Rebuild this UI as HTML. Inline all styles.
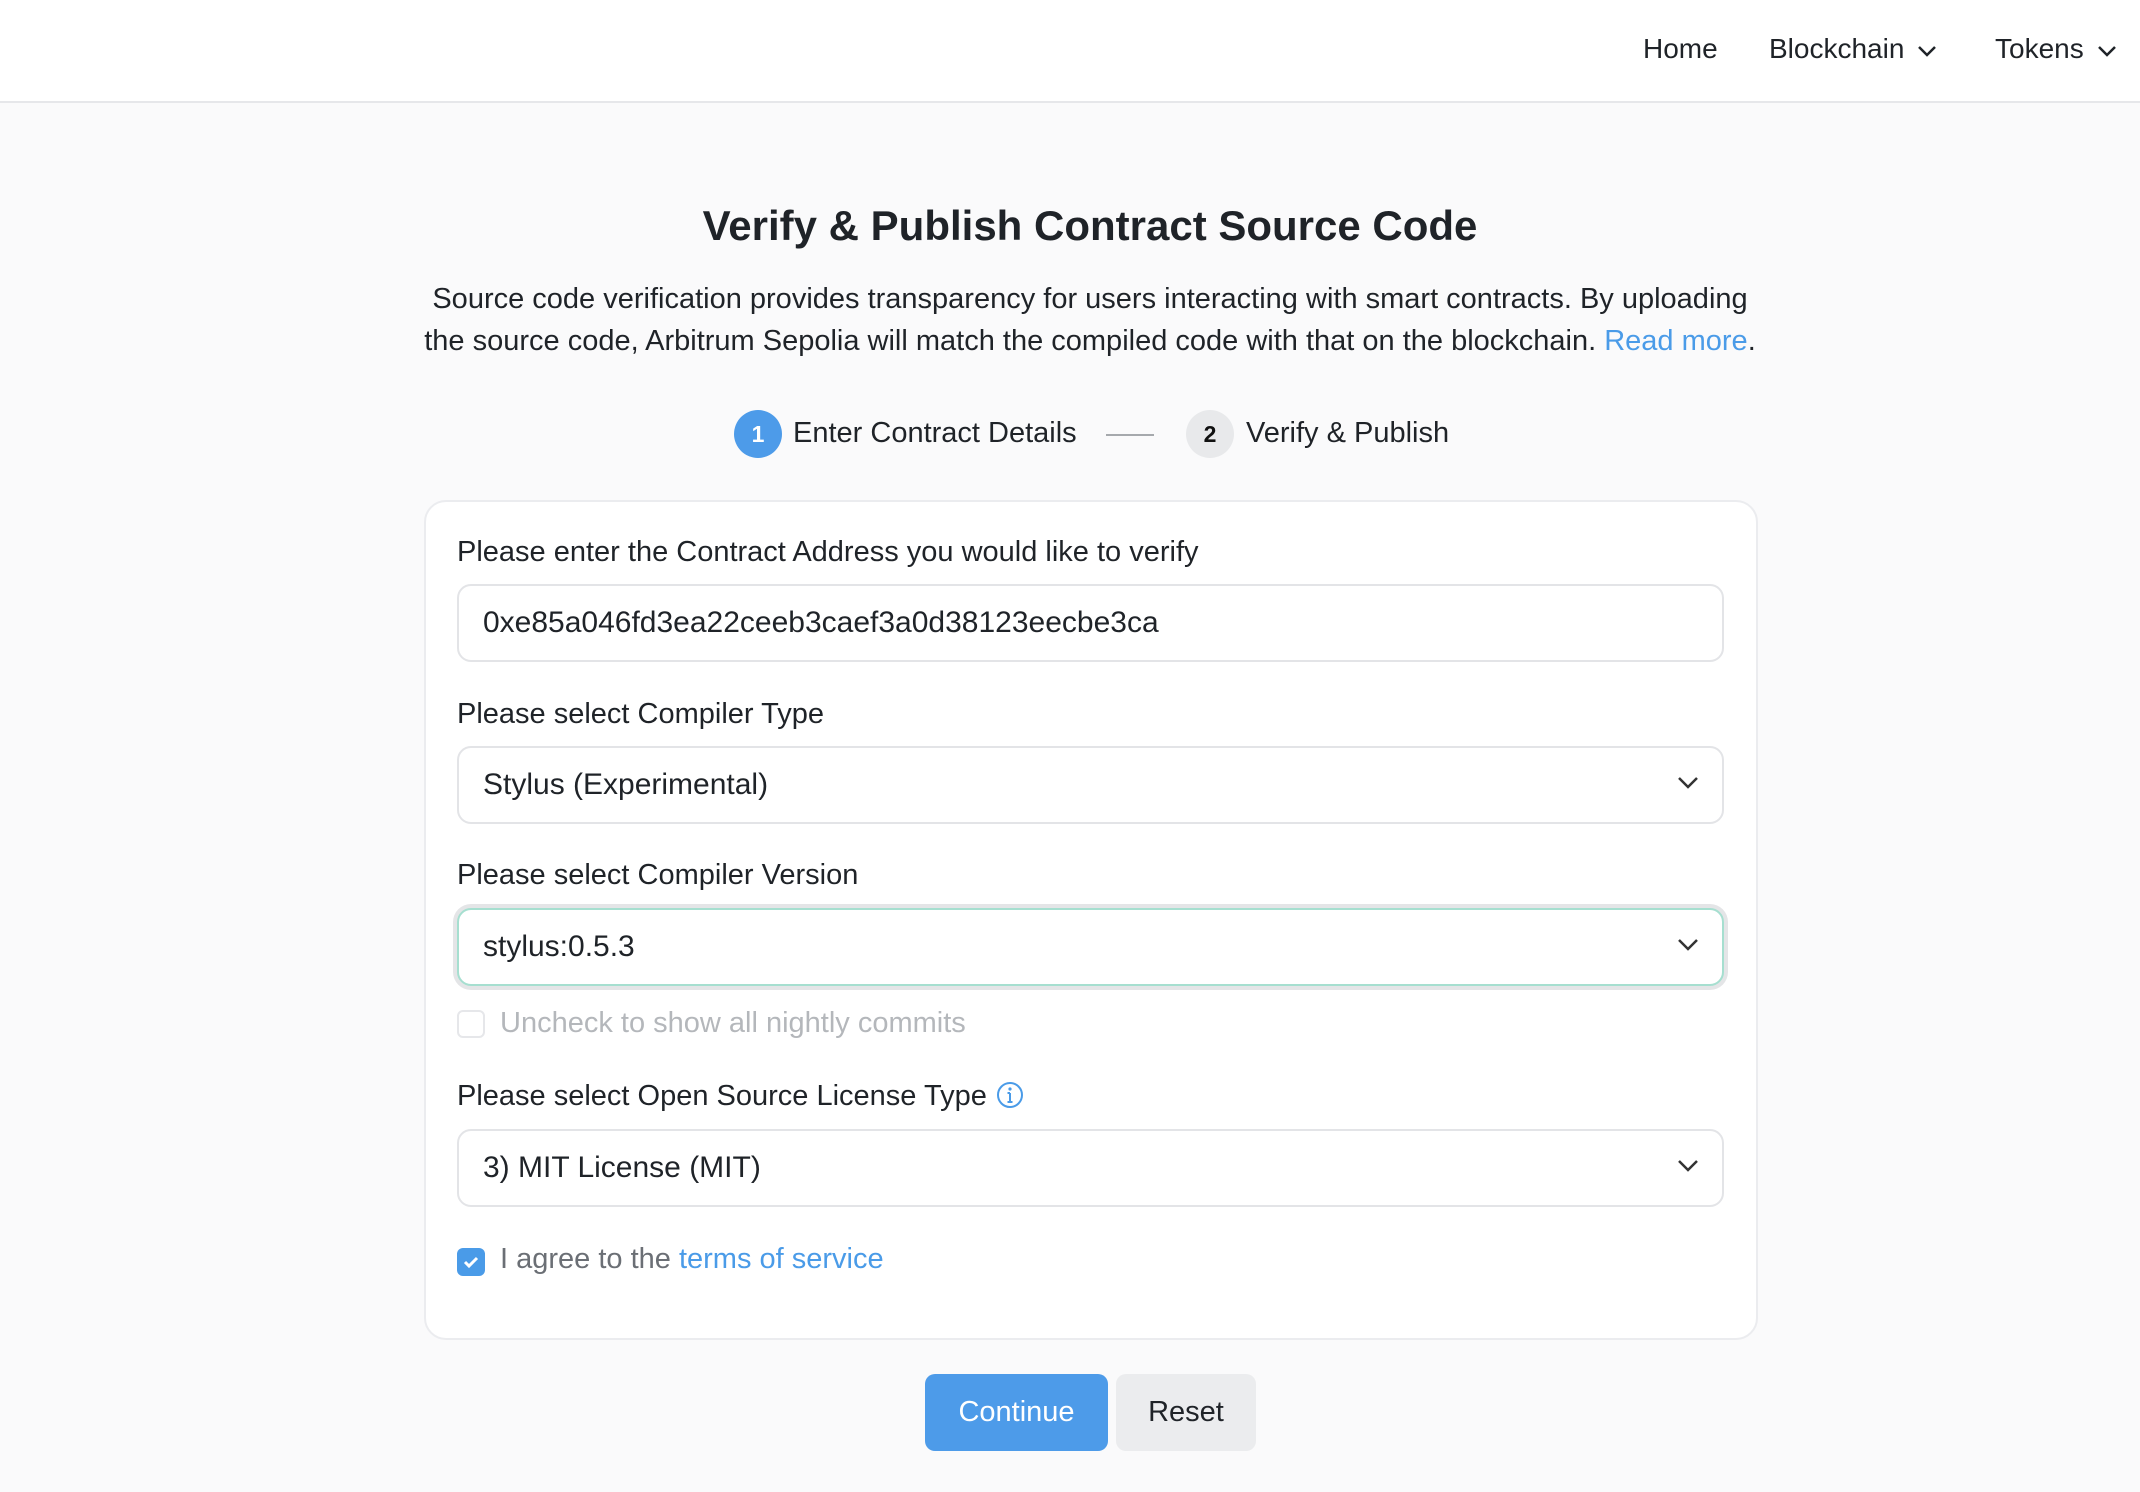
<!DOCTYPE html>
<html><head><meta charset="utf-8"><style>
*{box-sizing:border-box;margin:0;padding:0}
body{width:2140px;height:1492px;background:#fafafb;font-family:"Liberation Sans",Arial,sans-serif;color:#1f2328;position:relative;overflow:hidden}
.hdr{position:absolute;left:0;top:0;width:2140px;height:103px;background:#fff;border-bottom:2px solid #e6e7ea}
.nav{position:absolute;top:33px;font-size:28px;color:#1f2328}
.nav svg{vertical-align:middle;margin-left:12px}
h1{position:absolute;top:202px;left:0;width:2180px;text-align:center;font-size:42px;font-weight:bold}
.p{position:absolute;left:380px;width:1420px;top:278px;text-align:center;font-size:29px;line-height:42px}
a{color:#4a9be8;text-decoration:none}
.circ{position:absolute;width:48px;height:48px;border-radius:50%;font-size:23px;font-weight:bold;text-align:center;line-height:48px;top:410px}
.st{position:absolute;top:417px;font-size:29px}
.card{position:absolute;left:424px;top:500px;width:1334px;height:840px;background:#fff;border:2px solid #ebecef;border-radius:22px}
.lbl{position:absolute;left:457px;font-size:29px}
.in{position:absolute;left:457px;width:1267px;height:78px;border:2px solid #e3e4e7;border-radius:14px;background:#fff;font-size:30px;padding-left:24px;line-height:74px}
.in svg{position:absolute;right:22px;top:27px}
.btn{position:absolute;top:1374px;height:77px;border-radius:10px;font-size:29px;text-align:center;line-height:77px}
</style></head><body>
<div class="hdr">
<div class="nav" style="left:1643px">Home</div>
<div class="nav" style="left:1769px">Blockchain<svg width="22" height="16" viewBox="0 0 22 16"><path d="M3 4l8 8 8-8" fill="none" stroke="#1f2328" stroke-width="2.5"/></svg></div>
<div class="nav" style="left:1995px">Tokens<svg width="22" height="16" viewBox="0 0 22 16"><path d="M3 4l8 8 8-8" fill="none" stroke="#1f2328" stroke-width="2.5"/></svg></div>
</div>
<h1>Verify &amp; Publish Contract Source Code</h1>
<div class="p">Source code verification provides transparency for users interacting with smart contracts. By uploading<br>the source code, Arbitrum Sepolia will match the compiled code with that on the blockchain. <a>Read more</a>.</div>
<div class="circ" style="left:734px;background:#4d9be9;color:#fff">1</div>
<div class="st" style="left:793px">Enter Contract Details</div>
<div style="position:absolute;left:1106px;top:434px;width:48px;height:2px;background:#a6a9ad"></div>
<div class="circ" style="left:1186px;background:#e8e9eb;color:#111">2</div>
<div class="st" style="left:1246px">Verify &amp; Publish</div>
<div class="card"></div>
<div class="lbl" style="top:536px">Please enter the Contract Address you would like to verify</div>
<div class="in" style="top:584px">0xe85a046fd3ea22ceeb3caef3a0d38123eecbe3ca</div>
<div class="lbl" style="top:698px">Please select Compiler Type</div>
<div class="in" style="top:746px">Stylus (Experimental)<svg width="24" height="16" viewBox="0 0 24 16"><path d="M3 3l9 9 9-9" fill="none" stroke="#333" stroke-width="2.5"/></svg></div>
<div class="lbl" style="top:859px">Please select Compiler Version</div>
<div class="in" style="top:908px;border-color:#a6dfd0;box-shadow:0 0 0 4px #e4e5e7">stylus:0.5.3<svg width="24" height="16" viewBox="0 0 24 16"><path d="M3 3l9 9 9-9" fill="none" stroke="#333" stroke-width="2.5"/></svg></div>
<div style="position:absolute;left:457px;top:1010px;width:28px;height:28px;border:2px solid #e6e7ea;border-radius:6px"></div>
<div class="lbl" style="top:1007px;left:500px;color:#b4b7bb">Uncheck to show all nightly commits</div>
<div class="lbl" style="top:1080px">Please select Open Source License Type <svg width="30" height="30" viewBox="0 0 30 30" style="vertical-align:-5px"><circle cx="15" cy="15" r="12" fill="none" stroke="#4a9be8" stroke-width="2"/><path d="M15 13v9M12.5 22h5M12.5 13h2.5" stroke="#4a9be8" stroke-width="2" fill="none"/><circle cx="15" cy="9" r="1.6" fill="#4a9be8"/></svg></div>
<div class="in" style="top:1129px">3) MIT License (MIT)<svg width="24" height="16" viewBox="0 0 24 16"><path d="M3 3l9 9 9-9" fill="none" stroke="#333" stroke-width="2.5"/></svg></div>
<div style="position:absolute;left:457px;top:1248px;width:28px;height:28px;background:#4a9be8;border-radius:6px"><svg width="28" height="28" viewBox="0 0 28 28"><path d="M8 14l4 4 8-8" fill="none" stroke="#fff" stroke-width="3"/></svg></div>
<div class="lbl" style="top:1243px;left:500px;color:#6b6f75">I agree to the <a>terms of service</a></div>
<div class="btn" style="left:925px;width:183px;background:#4d9be9;color:#fff">Continue</div>
<div class="btn" style="left:1116px;width:140px;background:#ebecee;color:#1f2328">Reset</div>
</body></html>
